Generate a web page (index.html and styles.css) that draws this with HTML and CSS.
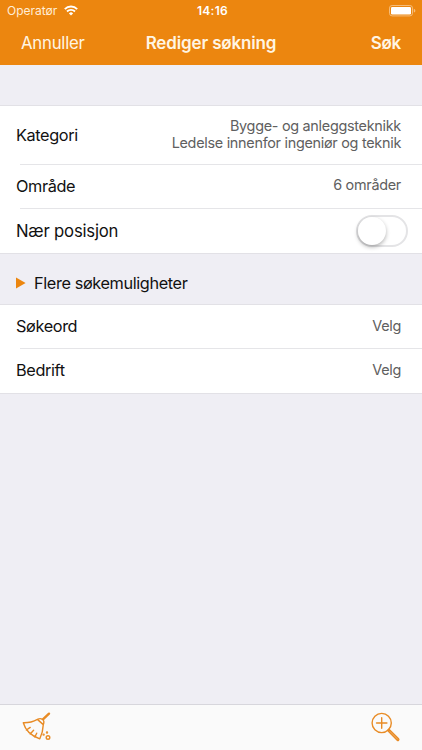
FILE: index.html
```
<!DOCTYPE html>
<html lang="no">
<head>
<meta charset="utf-8">
<title>Rediger søkning</title>
<link rel="stylesheet" href="styles.css">
</head>
<body>
<header class="header">
  <div class="status">
    <div class="carrier"><span>Operatør</span>
      <svg width="14" height="11" viewBox="0 0 14 11" fill="none" stroke="#fff" stroke-width="1.9"><path d="M.8 4.1a8.8 8.8 0 0 1 12.4 0M3 6.5a5.7 5.7 0 0 1 8 0"/><path d="M7 10.6 4.9 8.4a3 3 0 0 1 4.2 0z" fill="#fff" stroke="none"/></svg>
    </div>
    <span class="clock">14:16</span>
    <svg class="battery" width="27" height="12" viewBox="0 0 27 12"><rect x=".5" y=".5" width="23" height="10.4" rx="2.6" fill="none" stroke="#f6bd7a"/><rect x="2" y="2" width="20" height="7.4" rx="1.2" fill="#fff"/><path d="M24.8 3.8q1.6.5 1.6 1.9t-1.6 1.9z" fill="#f6bd7a"/></svg>
  </div>
  <nav class="nav">
    <span class="cancel">Annuller</span>
    <h1 class="title">Rediger søkning</h1>
    <span class="search">Søk</span>
  </nav>
</header>
<main class="content">
  <section class="group">
    <div class="row tall"><span class="label">Kategori</span><span class="value">Bygge- og anleggsteknikk<br>Ledelse innenfor ingeniør og teknik</span></div>
    <div class="row"><span class="label">Område</span><span class="value">6 områder</span></div>
    <div class="row"><span class="label near">Nær posisjon</span><span class="switch"><span class="knob"></span></span></div>
  </section>
  <div class="more"><svg width="10" height="12" viewBox="0 0 10 12"><path d="M0 .5 9.6 6 0 11.5z" fill="#ec860f"/></svg><span class="more-text">Flere søkemuligheter</span></div>
  <section class="group second">
    <div class="row"><span class="label">Søkeord</span><span class="value">Velg</span></div>
    <div class="row"><span class="label">Bedrift</span><span class="value">Velg</span></div>
  </section>
</main>
<footer class="toolbar">
  <svg width="30" height="30" viewBox="0 0 30 30" fill="none" stroke="#e88b25" stroke-width="1.4" stroke-linecap="round" stroke-linejoin="round"><path d="M27 1.7 21.2 7.2" stroke-width="2.4"/><path d="M15.3 7.4q3-1.5 5.1-.1 2.4 1.8.9 5.3L15.4 7.4Q9 11 1.3 10.8q3.1 11.4 16.5 16Q21 20 21.3 12.6M4.4 18l3.8-2.6M8.2 22l3.4-3.8M12.8 25l1.9-3.8"/><circle cx="26" cy="25.5" r="1.8"/><circle cx="21.6" cy="22.6" r=".5"/><circle cx="25" cy="20.5" r=".5"/></svg>
  <svg width="30" height="30" viewBox="0 0 30 30" fill="none" stroke="#e88b25" stroke-width="1.4" stroke-linecap="round"><circle cx="10.7" cy="11" r="9.6"/><path d="M5.5 11h10.4M10.7 5.8v10.4"/><path d="m17.8 18.3 9.1 9.2" stroke-width="3.2"/><path d="m19 19.5 7.5 7.6" stroke="#f2b575" stroke-width=".8"/></svg>
</footer>
</body>
</html>
```
FILE: styles.css
```
* { box-sizing: border-box; }
body {
  margin: 0;
  height: 750px;
  display: flex;
  flex-direction: column;
  overflow: hidden;
  background: #efeef4;
  color: #111;
  font-family: Inter, "Liberation Sans", sans-serif;
  font-size: 16.3px;
}
span, h1 { white-space: nowrap; }
.header { height: 65px; background: #ec860f; color: #fff; }
.status {
  height: 22px;
  padding: 0 6px 0 7px;
  display: grid;
  grid-template-columns: 1fr auto 1fr;
  align-items: center;
  font-size: 12px;
}
.carrier {
  height: 20px;
  margin-bottom: 2px;
  display: flex;
  align-items: center;
  gap: 7px;
  color: #ffedd6;
}
.clock { margin: 0 0 1px 2px; font-weight: 600; letter-spacing: .3px; }
.battery { justify-self: end; margin-bottom: 1px; }
.nav {
  height: 43px;
  padding: 0 21px;
  display: grid;
  grid-template-columns: 1fr auto 1fr;
  align-items: center;
  color: #fff5e3;
}
.title { margin: 0; padding-bottom: 1px; font-size: 17px; font-weight: 600; letter-spacing: -.15px; }
.cancel { font-size: 16.8px; letter-spacing: -.25px; padding-bottom: 1px; }
.search { justify-self: end; font-size: 17px; font-weight: 600; letter-spacing: -.3px; padding-bottom: 1px; }
.content { flex: 1; padding-top: 40px; }
.group {
  background: #fff;
  border-top: 1px solid #e2e1e6;
  border-bottom: 1px solid #e2e1e6;
}
.row {
  position: relative;
  height: 44.5px;
  padding: 0 21px 0 16px;
  display: flex;
  align-items: center;
  justify-content: space-between;
}
.row + .row::before {
  content: "";
  position: absolute;
  left: 20px;
  right: 0;
  top: -1px;
  height: 1px;
  background: #e5e5e8;
}
.tall + .row::before { top: 0; }
.tall { height: 58px; }
.second .row { height: 44px; }
.second .label { padding-bottom: 2px; }
.label, .more-text { letter-spacing: -.38px; }
.near { font-size: 16.7px; letter-spacing: -.2px; }
.value {
  color: #606060;
  font-size: 14.4px;
  line-height: 17px;
  letter-spacing: -.28px;
  text-align: right;
  padding-bottom: 3px;
}
.second .value { padding-bottom: 4px; }
.switch {
  width: 52px;
  height: 32px;
  margin-right: -7px;
  border: 2px solid #e4e4e6;
  border-radius: 16px;
}
.knob {
  display: block;
  width: 28px;
  height: 28px;
  border-radius: 50%;
  background: #fff;
  box-shadow: 0 2px 4px rgba(0, 0, 0, .3);
}
.more {
  height: 50px;
  padding: 8px 16px 0;
  display: flex;
  align-items: center;
  gap: 8px;
}
.toolbar {
  height: 46px;
  padding: 0 21px 1px 22px;
  display: flex;
  justify-content: space-between;
  align-items: center;
  background: #fafafa;
  border-top: 1px solid #d7d6dc;
}
```
